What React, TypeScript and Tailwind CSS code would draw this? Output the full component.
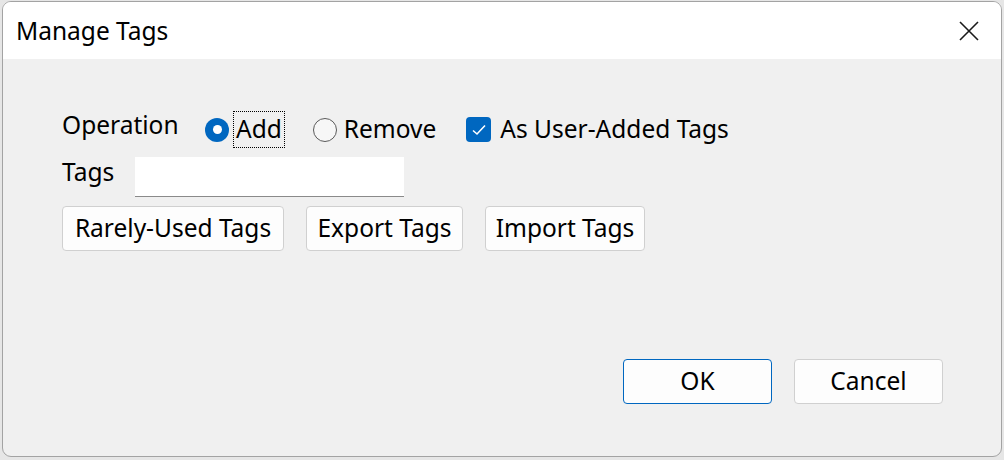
import React, { useState } from 'react';

const font = { fontFamily: '"Noto Sans", "Open Sans", sans-serif' };

function Radio({ checked, label, focused, onClick }: { checked: boolean; label: string; focused?: boolean; onClick: () => void }) {
    return (
        <button className="flex items-center" onClick={onClick}>
            {checked ? (
                <span className="w-[24px] h-[24px] rounded-full bg-[#0067c0] flex items-center justify-center">
                    <span className="w-[9px] h-[9px] rounded-full bg-white" />
                </span>
            ) : (
                <span className="w-[24px] h-[24px] rounded-full border border-[#5a5a5a] bg-[#f7f7f7]" />
            )}
            <span
                className={
                    focused
                        ? 'ml-[4px] px-[3px] h-[37px] flex items-center outline-dotted outline-1 outline-black -outline-offset-1'
                        : 'ml-[6px] px-[1px] h-[37px] flex items-center'
                }
            >
                {label}
            </span>
        </button>
    );
}

function Button({ children, primary, className }: { children: React.ReactNode; primary?: boolean; className?: string }) {
    return (
        <button
            className={
                'h-[45px] bg-[#fdfdfd] rounded-[4px] border ' +
                (primary ? 'border-[#0067c0] ' : 'border-[#d0d0d0] ') +
                (className ?? '')
            }
        >
            {children}
        </button>
    );
}

export default function App() {
    const [op, setOp] = useState<'add' | 'remove'>('add');
    const [asUser, setAsUser] = useState(true);

    return (
        <div className="w-[1004px] h-[460px] bg-[#e6e6e6] pt-[1px] pl-[2px]" style={font}>
            <div className="w-[1000px] h-[456px] rounded-[9px] border border-[#a3a3a3] bg-[#f0f0f0] overflow-hidden flex flex-col text-[24.5px] text-black">
                <div className="h-[57px] bg-white flex items-center justify-between pl-[13px] pr-[22px] shrink-0">
                    <span className="text-[24.5px] mt-[1px]">Manage Tags</span>
                    <svg width="20" height="20" viewBox="0 0 20 20" className="text-[#1a1a1a]">
                        <path d="M1 1 L19 19 M19 1 L1 19" stroke="currentColor" strokeWidth="1.6" />
                    </svg>
                </div>

                <div className="flex flex-col pl-[59px] pt-[52px]">
                    <div className="flex items-center h-[37px]">
                        <span className="w-[143px] -mt-[8px]">Operation</span>
                        <Radio checked={op === 'add'} label="Add" focused onClick={() => setOp('add')} />
                        <div className="ml-[28px]">
                            <Radio checked={op === 'remove'} label="Remove" onClick={() => setOp('remove')} />
                        </div>
                        <button className="ml-[29px] flex items-center" onClick={() => setAsUser(!asUser)}>
                            <span className="w-[25px] h-[25px] rounded-[4px] bg-[#0067c0] flex items-center justify-center">
                                {asUser && (
                                    <svg width="18" height="18" viewBox="0 0 18 18">
                                        <path d="M3 9.5 L7 13 L15 4.5" stroke="white" strokeWidth="1.6" fill="none" />
                                    </svg>
                                )}
                            </span>
                            <span className="ml-[9px]">As User-Added Tags</span>
                        </button>
                    </div>

                    <div className="flex items-start mt-[9px]">
                        <span className="w-[73px] -mt-[3px]">Tags</span>
                        <input className="w-[269px] h-[40px] bg-white border-b border-[#8a8a8a] outline-none px-2" />
                    </div>

                    <div className="flex gap-[22px] mt-[9px]">
                        <Button className="w-[222px]">Rarely-Used Tags</Button>
                        <Button className="w-[157px]">Export Tags</Button>
                        <Button className="w-[160px]">Import Tags</Button>
                    </div>
                </div>

                <div className="flex justify-end gap-[22px] pr-[58px] mt-[108px]">
                    <Button primary className="w-[149px]">OK</Button>
                    <Button className="w-[149px]">Cancel</Button>
                </div>
            </div>
        </div>
    );
}
